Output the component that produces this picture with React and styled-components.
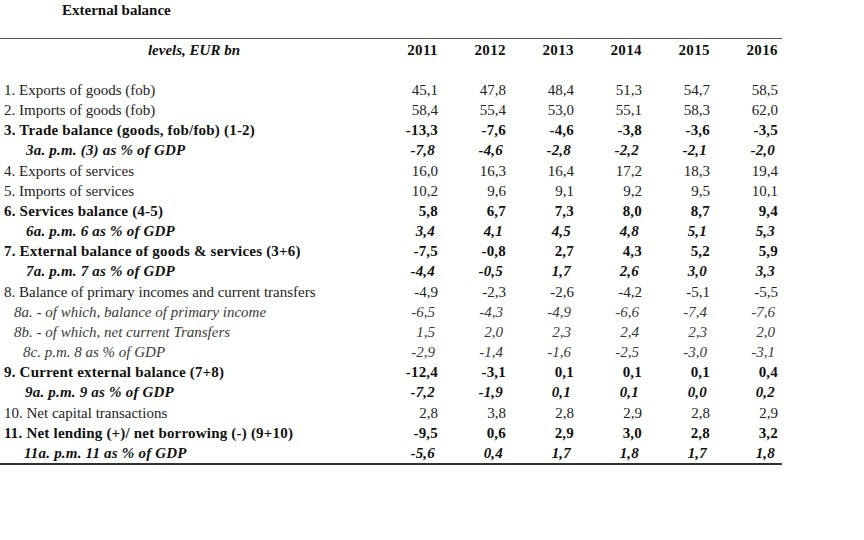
import React from 'react'
import styled, { createGlobalStyle } from 'styled-components'

const GlobalStyle = createGlobalStyle`
    body {
        margin: 0;
        background: #ffffff;
        font-family: "Liberation Serif", "Times New Roman", serif;
        color: #1a1a1a;
    }
`

const Page = styled.div`
    width: 864px;
    height: 540px;
    padding-top: 0;
`

const Title = styled.div`
    margin-left: 62px;
    font-size: 15px;
    font-weight: bold;
    line-height: 20px;
    height: 20px;
    margin-bottom: 18px;
    color: #111;
`

const Table = styled.div`
    width: 782px;
    border-top: 1px solid #555;
    border-bottom: 2px solid #333;
`

const cols = '370px repeat(6, 68px)'

const HeadRow = styled.div`
    display: grid;
    grid-template-columns: ${cols};
    height: 41px;
    line-height: 22px;
    font-size: 15px;
    font-weight: bold;
    color: #111;
`

const HeadLabel = styled.div`
    font-style: italic;
    text-align: center;
    padding-left: 18px;
`

const Year = styled.div`
    text-align: right;
    letter-spacing: 0.4px;
`

const Row = styled.div`
    display: grid;
    grid-template-columns: ${cols};
    height: 20.17px;
    line-height: 20.17px;
    font-size: 15px;
    white-space: nowrap;
    font-weight: ${p => (p.$bold ? 'bold' : 'normal')};
    font-style: ${p => (p.$italic ? 'italic' : 'normal')};
    color: ${p => (p.$bold ? '#111' : p.$italic ? '#3a3a3a' : '#222')};
    letter-spacing: ${p => (p.$bold ? '0.2px' : '0')};
`

const Label = styled.div`
    padding-left: ${p => p.$indent}px;
`

const Num = styled.div`
    text-align: right;
    padding-right: ${p => p.$shift}px;
`

const years = ['2011', '2012', '2013', '2014', '2015', '2016']

const rows = [
    { label: '1. Exports of goods (fob)', v: ['45,1', '47,8', '48,4', '51,3', '54,7', '58,5'] },
    { label: '2. Imports of goods (fob)', v: ['58,4', '55,4', '53,0', '55,1', '58,3', '62,0'] },
    { label: '3. Trade balance (goods, fob/fob) (1-2)', bold: true, v: ['-13,3', '-7,6', '-4,6', '-3,8', '-3,6', '-3,5'] },
    { label: '3a. p.m. (3) as % of GDP', bold: true, italic: true, indent: 26, v: ['-7,8', '-4,6', '-2,8', '-2,2', '-2,1', '-2,0'] },
    { label: '4. Exports of services', v: ['16,0', '16,3', '16,4', '17,2', '18,3', '19,4'] },
    { label: '5. Imports of services', v: ['10,2', '9,6', '9,1', '9,2', '9,5', '10,1'] },
    { label: '6. Services balance (4-5)', bold: true, v: ['5,8', '6,7', '7,3', '8,0', '8,7', '9,4'] },
    { label: '6a. p.m. 6 as % of GDP', bold: true, italic: true, indent: 26, v: ['3,4', '4,1', '4,5', '4,8', '5,1', '5,3'] },
    { label: '7. External balance of goods & services (3+6)', bold: true, v: ['-7,5', '-0,8', '2,7', '4,3', '5,2', '5,9'] },
    { label: '7a. p.m. 7 as % of GDP', bold: true, italic: true, indent: 26, v: ['-4,4', '-0,5', '1,7', '2,6', '3,0', '3,3'] },
    { label: '8. Balance of primary incomes and current transfers', v: ['-4,9', '-2,3', '-2,6', '-4,2', '-5,1', '-5,5'] },
    { label: '8a. - of which, balance of primary income', italic: true, indent: 14, v: ['-6,5', '-4,3', '-4,9', '-6,6', '-7,4', '-7,6'] },
    { label: '8b. - of which, net current Transfers', italic: true, indent: 14, v: ['1,5', '2,0', '2,3', '2,4', '2,3', '2,0'] },
    { label: '8c. p.m. 8 as % of GDP', italic: true, indent: 23, v: ['-2,9', '-1,4', '-1,6', '-2,5', '-3,0', '-3,1'] },
    { label: '9. Current external balance (7+8)', bold: true, v: ['-12,4', '-3,1', '0,1', '0,1', '0,1', '0,4'] },
    { label: '9a. p.m. 9 as % of GDP', bold: true, italic: true, indent: 25, v: ['-7,2', '-1,9', '0,1', '0,1', '0,0', '0,2'] },
    { label: '10. Net capital transactions', v: ['2,8', '3,8', '2,8', '2,9', '2,8', '2,9'] },
    { label: '11. Net lending (+)/ net borrowing (-) (9+10)', bold: true, v: ['-9,5', '0,6', '2,9', '3,0', '2,8', '3,2'] },
    { label: '11a. p.m. 11 as % of GDP', bold: true, italic: true, indent: 24, v: ['-5,6', '0,4', '1,7', '1,8', '1,7', '1,8'] },
]

const App = () => {
    return (
        <Page>
            <GlobalStyle />
            <Title>External balance</Title>
            <Table>
                <HeadRow>
                    <HeadLabel>levels, EUR bn</HeadLabel>
                    {years.map(y => <Year key={y}>{y}</Year>)}
                </HeadRow>
                {rows.map(r => (
                    <Row key={r.label} $bold={r.bold} $italic={r.italic}>
                        <Label $indent={r.indent || 4}>{r.label}</Label>
                        {r.v.map((n, i) => (
                            <Num key={i} $shift={r.italic ? 3 : 0}>{n}</Num>
                        ))}
                    </Row>
                ))}
            </Table>
        </Page>
    )
}

export default App
